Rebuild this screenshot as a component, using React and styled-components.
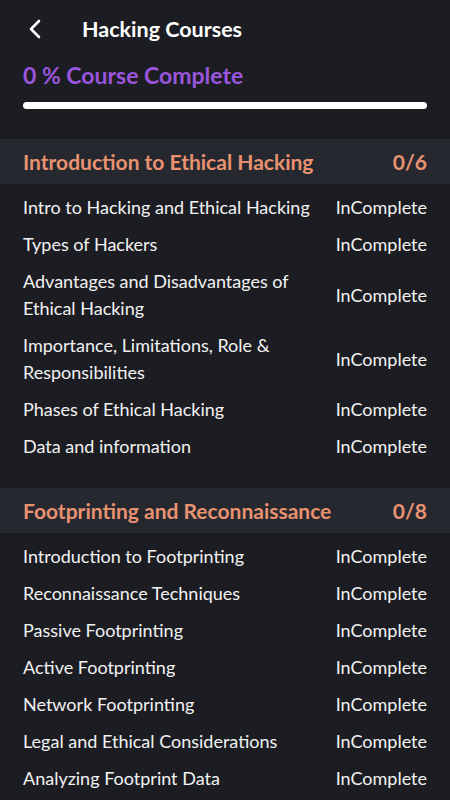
import styled, { createGlobalStyle } from 'styled-components';

const GlobalStyle = createGlobalStyle`
  html, body {
    margin: 0;
    padding: 0;
    background: #1c1d22;
  }
  body {
    font-family: Lato, "Noto Sans", sans-serif;
  }
`;

const Screen = styled.div`
  width: 450px;
  height: 800px;
  background: #1c1d22;
  color: #ffffff;
  overflow: hidden;
`;

const TopBar = styled.div`
  display: flex;
  align-items: center;
  height: 57px;
  padding: 0 23px 0 24px;
  gap: 38px;
`;

const BackButton = styled.button`
  display: flex;
  align-items: center;
  justify-content: center;
  width: 20px;
  height: 24px;
  padding: 0;
  border: none;
  background: none;
  color: #ffffff;
`;

const Title = styled.h1`
  margin: 0;
  font-size: 21.5px;
  font-weight: 700;
`;

const Progress = styled.div`
  padding: 0 23px;
`;

const ProgressLabel = styled.div`
  color: #9a55dc;
  font-size: 23px;
  font-weight: 700;
  line-height: 36px;
`;

const Track = styled.div`
  margin-top: 9px;
  height: 7px;
  border-radius: 4px;
  background: #ffffff;
`;

const Sections = styled.div`
  margin-top: 30px;
  display: flex;
  flex-direction: column;
  gap: 23px;
`;

const SectionHeader = styled.div`
  display: flex;
  align-items: center;
  justify-content: space-between;
  height: 45px;
  padding: 0 23px;
  background: #262830;
  color: #e89270;
  font-size: 21px;
  font-weight: 700;
`;

const List = styled.div`
  padding-top: 5px;
`;

const Row = styled.div`
  display: flex;
  align-items: center;
  justify-content: space-between;
  gap: 12px;
  padding: 5px 23px;
  font-size: 18px;
  line-height: 27px;
  color: #f2f2f2;
`;

const Topic = styled.span`
  flex: 1;
`;

const Status = styled.span`
  white-space: nowrap;
`;

const sections = [
  {
    title: 'Introduction to Ethical Hacking',
    total: 6,
    topics: [
      'Intro to Hacking and Ethical Hacking',
      'Types of Hackers',
      'Advantages and Disadvantages of Ethical Hacking',
      'Importance, Limitations, Role & Responsibilities',
      'Phases of Ethical Hacking',
      'Data and information',
    ],
  },
  {
    title: 'Footprinting and Reconnaissance',
    total: 8,
    topics: [
      'Introduction to Footprinting',
      'Reconnaissance Techniques',
      'Passive Footprinting',
      'Active Footprinting',
      'Network Footprinting',
      'Legal and Ethical Considerations',
      'Analyzing Footprint Data',
    ],
  },
];

const App = () => (
  <Screen>
    <GlobalStyle />
    <TopBar>
      <BackButton aria-label="Back">
        <svg width="13" height="20" viewBox="0 0 13 20" fill="none">
          <path d="M11 2 L3 10 L11 18" stroke="#fff" strokeWidth="2.6" strokeLinecap="round" strokeLinejoin="round" />
        </svg>
      </BackButton>
      <Title>Hacking Courses</Title>
    </TopBar>
    <Progress>
      <ProgressLabel>0 % Course Complete</ProgressLabel>
      <Track />
    </Progress>
    <Sections>
      {sections.map((s) => (
        <section key={s.title}>
          <SectionHeader>
            <span>{s.title}</span>
            <span>0/{s.total}</span>
          </SectionHeader>
          <List>
            {s.topics.map((t) => (
              <Row key={t}>
                <Topic>{t}</Topic>
                <Status>InComplete</Status>
              </Row>
            ))}
          </List>
        </section>
      ))}
    </Sections>
  </Screen>
);

export default App;
